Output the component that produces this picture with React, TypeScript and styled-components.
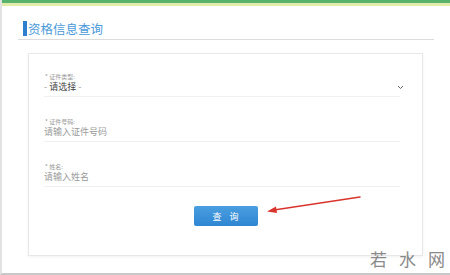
import React from "react";
import styled, { createGlobalStyle } from "styled-components";

const Global = createGlobalStyle`
  html, body { margin: 0; padding: 0; background: #fff; }
  body { font-family: "Noto Sans CJK SC", "Noto Sans", sans-serif; }
`;

const Page = styled.div`
  position: relative;
  width: 450px;
  height: 275px;
  box-sizing: border-box;
  border-left: 2px solid #e2e2e2;
  border-bottom: 2px solid #c8c8c8;
  overflow: hidden;
  background: #fff;
`;

const TopBar = styled.div`
  height: 3px;
  background: #58b46c;
  border-bottom: 3px solid #e2ecaa;
`;

const Header = styled.div`
  margin: 15px 16px 0 16px;
  padding: 0 0 3px 5px;
  border-bottom: 1px solid #dcdcdc;
  display: flex;
  align-items: center;
`;

const Title = styled.h1`
  margin: 0;
  font-size: 12.5px;
  line-height: 15px;
  font-weight: 400;
  color: #4a9ada;
  border-left: 4px solid #2f7fcf;
  padding-left: 1px;
`;

const Card = styled.div`
  margin: 13px 0 0 26px;
  width: 395px;
  height: 203px;
  box-sizing: border-box;
  border: 1px solid #e8e8e8;
  box-shadow: 0 1px 3px rgba(0, 0, 0, 0.06);
  padding: 19px 22px 0 15px;
  display: flex;
  flex-direction: column;
`;

const Field = styled.div<{ $last?: boolean }>`
  display: flex;
  flex-direction: column;
  margin-bottom: ${(p) => (p.$last ? "0" : "21px")};
`;

const Label = styled.div`
  font-size: 6px;
  line-height: 8px;
  color: #999;
  margin-left: 1px;
`;

const Value = styled.div<{ $placeholder?: boolean }>`
  font-size: 9px;
  line-height: 12px;
  color: ${(p) => (p.$placeholder ? "#9a9a9a" : "#444")};
  padding-bottom: 3px;
  border-bottom: 1px solid #f0f0f0;
  display: flex;
  justify-content: space-between;
  align-items: center;
`;

const Dash = styled.span`
  color: #999;
`;

const Chevron = styled.svg`
  margin-right: -4px;
`;

const ButtonRow = styled.div`
  display: flex;
  justify-content: center;
  margin-top: 19px;
  margin-right: -7px;
`;

const Button = styled.button`
  width: 64px;
  height: 20px;
  border: none;
  border-radius: 2px;
  background: linear-gradient(#4a9ee0, #2f86d2);
  color: #fff;
  font-family: "Noto Sans CJK SC", sans-serif;
  font-size: 9px;
  letter-spacing: 8px;
  padding: 0 0 0 8px;
`;

const Arrow = styled.svg`
  position: absolute;
  left: 262px;
  top: 195px;
`;

const Watermark = styled.div`
  position: absolute;
  right: 5px;
  bottom: 4px;
  display: flex;
  gap: 12px;
  font-size: 17px;
  line-height: 20px;
  color: #8a8a8a;
  font-family: "Noto Sans CJK SC", sans-serif;
`;

export default function App() {
  return (
    <>
      <Global />
      <Page>
        <TopBar />
        <Header>
          <Title>资格信息查询</Title>
        </Header>
        <Card>
          <Field>
            <Label>* 证件类型:</Label>
            <Value>
              <span>
                <Dash>- </Dash>请选择<Dash> -</Dash>
              </span>
              <Chevron width="7" height="5" viewBox="0 0 7 5">
                <path d="M1 1 L3.5 3.5 L6 1" stroke="#666" strokeWidth="1" fill="none" />
              </Chevron>
            </Value>
          </Field>
          <Field>
            <Label>* 证件号码:</Label>
            <Value $placeholder>请输入证件号码</Value>
          </Field>
          <Field $last>
            <Label>* 姓名:</Label>
            <Value $placeholder>请输入姓名</Value>
          </Field>
          <ButtonRow>
            <Button>查询</Button>
          </ButtonRow>
        </Card>
        <Arrow width="100" height="22" viewBox="0 0 100 22">
          <path d="M96 2 L10 15" stroke="#d9342c" strokeWidth="1.5" fill="none" strokeLinecap="round" />
          <path d="M3 16.5 L12 11.5 L13 18 Z" fill="#d9342c" />
        </Arrow>
        <Watermark>
          <span>若</span>
          <span>水</span>
          <span>网</span>
        </Watermark>
      </Page>
    </>
  );
}
